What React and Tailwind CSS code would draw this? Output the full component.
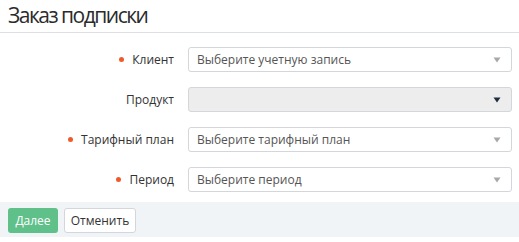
import React from 'react';

const fields = [
  { label: 'Клиент', required: true, placeholder: 'Выберите учетную запись' },
  { label: 'Продукт', required: false, disabled: true },
  { label: 'Тарифный план', required: true, placeholder: 'Выберите тарифный план' },
  { label: 'Период', required: true, placeholder: 'Выберите период' },
];

const Caret = ({ dark }) => (
  <svg width="8" height="6" viewBox="0 0 8 6" className="shrink-0">
    <path d="M0.5 0.5 L7.5 0.5 L4 5.5 Z" fill={dark ? '#1f2d3d' : '#a8a8a8'} />
  </svg>
);

const App = () => {
  return (
    <div className="w-[519px] h-[242px] bg-white font-['Open_Sans',sans-serif] text-[#333]">
      <div className="h-[33px] border-b border-[#dcdfe3] px-[8px]">
        <h1 className="text-[21px] leading-[30px] tracking-[-1.5px] text-[#2b2b2b]">Заказ подписки</h1>
      </div>

      <div className="pt-[14px] pr-[7px] flex flex-col gap-[15px]">
        {fields.map((f) => (
          <div key={f.label} className="grid grid-cols-[174px_1fr] gap-x-[14px] items-center">
            <div className="flex items-center justify-end gap-[8px] text-[12px] text-[#333]">
              {f.required && <span className="w-[5px] h-[5px] rounded-full bg-[#ef5a2a]" />}
              <span>{f.label}</span>
            </div>
            <div
              className={`h-[25px] rounded-[3px] border border-[#d3d6da] flex items-center justify-between pl-[8px] pr-[10px] text-[12px] ${
                f.disabled ? 'bg-[#ededed]' : 'bg-white'
              }`}
            >
              <span className="text-[#555]">{f.placeholder}</span>
              <Caret dark={f.disabled} />
            </div>
          </div>
        ))}
      </div>

      <div className="mt-[10px] bg-[#f1f4f7] pt-[6px] pb-[4px] px-[8px] flex gap-[6px]">
        <button className="h-[25px] w-[50px] rounded-[3px] bg-[#5fc08a] text-white text-[12px]">Далее</button>
        <button className="h-[25px] w-[72px] rounded-[3px] bg-white border border-[#d3d6da] text-[#333] text-[12px]">
          Отменить
        </button>
      </div>
    </div>
  );
};

export default App;
